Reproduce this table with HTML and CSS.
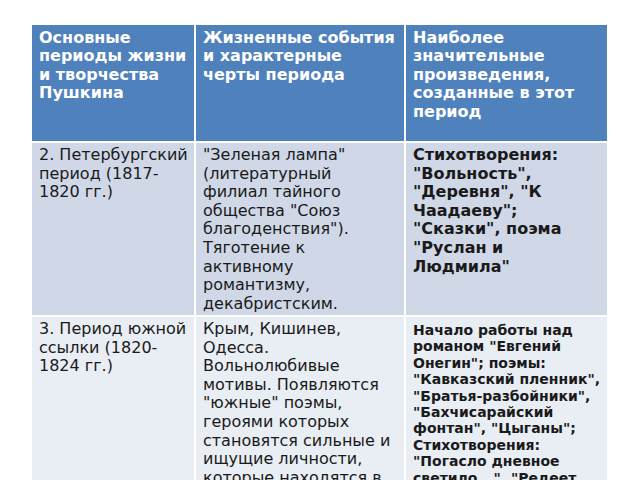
FILE: index.html
```html
<!DOCTYPE html>
<html lang="ru">
<head>
<meta charset="utf-8">
<link rel="stylesheet" href="styles.css">
</head>
<body>
<div class="table">
  <div class="cell head">Основные периоды жизни и творчества Пушкина</div>
  <div class="cell head events">Жизненные события и характерные черты периода</div>
  <div class="cell head">Наиболее значительные произведения, созданные в этот период</div>

  <div class="cell dark">2. Петербургский период (1817-1820 гг.)</div>
  <div class="cell dark events">"Зеленая лампа" (литературный филиал тайного общества "Союз благоденствия"). Тяготение к активному романтизму, декабристским.</div>
  <div class="cell dark works">Стихотворения: "Вольность", "Деревня", "К Чаадаеву"; "Сказки", поэма "Руслан и Людмила"</div>

  <div class="cell light">3. Период южной ссылки (1820-1824 гг.)</div>
  <div class="cell light events">Крым, Кишинев, Одесса. Вольнолюбивые мотивы. Появляются "южные" поэмы, героями которых становятся сильные и ищущие личности, которые находятся в конфликте с обществом.</div>
  <div class="cell light works small">Начало работы над романом "Евгений Онегин"; поэмы: "Кавказский пленник", "Братья-разбойники", "Бахчисарайский фонтан", "Цыганы"; Стихотворения: "Погасло дневное светило...", "Редеет облаков летучая гряда..."</div>
</div>
</body>
</html>
```

FILE: styles.css
```css
html, body {
  margin: 0;
  padding: 0;
  background: #ffffff;
  overflow: hidden;
}
body {
  width: 640px;
  height: 480px;
  font-family: "DejaVu Sans", sans-serif;
}
.table {
  margin: 25px 0 0 32px;
  width: 575px;
  display: grid;
  grid-template-columns: 162px 208px 201px;
  grid-template-rows: 116px 172px 200px;
  gap: 2px;
  background: #ffffff;
}
.cell {
  padding: 3px 3px 0 7px;
  font-size: 16px;
  line-height: 18.6px;
  color: #1a1a1a;
}
.events { padding-right: 9px; }
.head {
  background: #4f81bd;
  color: #ffffff;
  font-weight: bold;
  line-height: 18.4px;
  padding-top: 4px;
}
.dark { background: #d0d8e8; }
.light { background: #e9edf4; }
.works { font-weight: bold; }
.small { font-size: 14px; line-height: 16.4px; padding-top: 5px; }
```
